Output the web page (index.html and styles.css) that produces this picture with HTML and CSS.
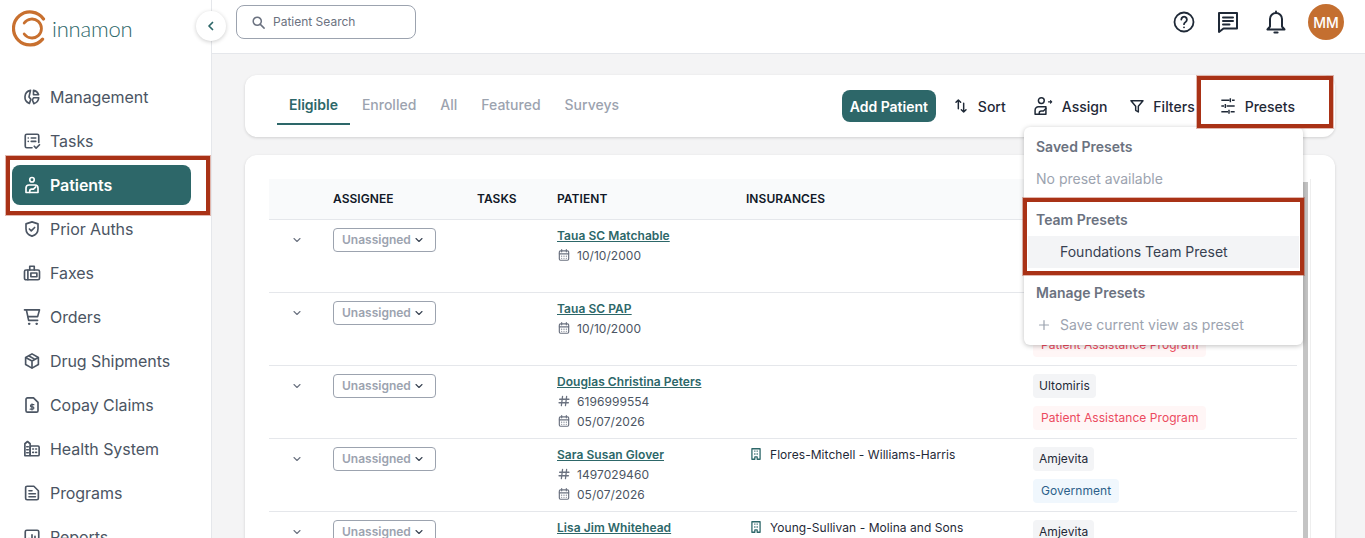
FILE: index.html
```html
<!DOCTYPE html>
<html lang="en">
<head>
  <meta charset="UTF-8">
  <meta name="viewport" content="width=device-width, initial-scale=1.0">
  <title>Cinnamon - Patients</title>
  <link rel="stylesheet" href="styles.css">
</head>
<body>

  <!-- Shared table icons -->
  <svg class="sprite" aria-hidden="true">
    <symbol id="i-chevron" viewBox="0 0 24 24"><path d="M6 9l6 6 6-6" fill="none" stroke="currentColor" stroke-width="2.2" stroke-linecap="round" stroke-linejoin="round"/></symbol>
    <symbol id="i-calendar" viewBox="0 0 24 24"><g fill="none" stroke="currentColor" stroke-width="2" stroke-linecap="round"><rect x="4" y="5" width="16" height="16" rx="2"/><path d="M8 2.500v4M16 2.500v4M4 10h16"/><path d="M8 14h.01M12 14h.01M16 14h.01M8 17.500h.01M12 17.500h.01M16 17.500h.01"/></g></symbol>
    <symbol id="i-hash" viewBox="0 0 24 24"><path d="M9.500 4L7.500 20M16.500 4l-2 16M4.500 9h16M3.500 15h16" fill="none" stroke="currentColor" stroke-width="2.2" stroke-linecap="round"/></symbol>
    <symbol id="i-building" viewBox="0 0 24 24"><g fill="none" stroke="currentColor" stroke-width="2.2" stroke-linejoin="round"><path d="M5 21V3h14v18h-5v-4h-4v4z"/><path d="M9 7h2M13 7h2M9 12h2M13 12h2"/></g></symbol>
  </svg>

  <!-- Sidebar -->
  <aside class="sidebar">
    <div class="logo">
      <svg class="logo-mark" width="38" height="40" viewBox="0 0 38 40">
        <g fill="none" stroke="#c8702f" stroke-linecap="round">
          <path d="M31.500 10A16.500 16.500 0 1 0 30.600 30.100" stroke-width="3.200"/>
          <path d="M12.200 14A9.500 9.500 0 1 1 12.200 25" stroke-width="2.800"/>
        </g>
      </svg>
      <span class="logo-text">innamon</span>
    </div>
    <nav class="nav">
      <a class="nav-item">
        <svg viewBox="0 0 24 24"><g fill="none" stroke="currentColor" stroke-width="2.200" stroke-linejoin="round"><path d="M10 3.200a9 9 0 0 0-1.500 17.300l2-5.500-2.500-3z"/><path d="M14 3.200V9h6.800A9 9 0 0 0 14 3.200z"/><path d="M14 13h7a9 9 0 0 1-6.500 7.800L12.500 16z"/></g></svg>
        Management
      </a>
      <a class="nav-item">
        <svg viewBox="0 0 24 24"><g fill="none" stroke="currentColor" stroke-width="2.200" stroke-linecap="round" stroke-linejoin="round"><path d="M12 21H5a2 2 0 0 1-2-2V5a2 2 0 0 1 2-2h14a2 2 0 0 1 2 2v9"/><path d="M7 8h.01M11 8h6M7 12.500h.01M11 12.500h6M15 19l2.500 2.500L22 17"/></g></svg>
        Tasks
      </a>
      <a class="nav-item active">
        <svg viewBox="0 0 24 24"><g fill="none" stroke="currentColor" stroke-width="2.200" stroke-linecap="round" stroke-linejoin="round"><circle cx="12" cy="5" r="3"/><path d="M4 22v-6a4 4 0 0 1 4-4h8a4 4 0 0 1 4 4v6z"/><path d="M9 22v-2a2.500 2.500 0 0 1 2.500-2.500h2.500l3-3"/></g></svg>
        Patients
      </a>
      <a class="nav-item">
        <svg viewBox="0 0 24 24"><g fill="none" stroke="currentColor" stroke-width="2.200" stroke-linecap="round" stroke-linejoin="round"><path d="M12 2.500l8 2.700v6.300c0 5-3.500 8.500-8 10-4.500-1.500-8-5-8-10V5.200z"/><path d="M8.500 12l2.500 2.500 4.500-4.500"/></g></svg>
        Prior Auths
      </a>
      <a class="nav-item">
        <svg viewBox="0 0 24 24"><g fill="none" stroke="currentColor" stroke-width="2.200" stroke-linecap="round" stroke-linejoin="round"><path d="M9 8V3h6v5"/><rect x="2" y="8" width="20" height="13" rx="2"/><path d="M6.500 8v13"/><rect x="10.500" y="12" width="8" height="5"/></g></svg>
        Faxes
      </a>
      <a class="nav-item">
        <svg viewBox="0 0 24 24"><g fill="none" stroke="currentColor" stroke-width="2.200" stroke-linecap="round" stroke-linejoin="round"><path d="M2 2.500h20l-2.500 9H6.500"/><path d="M4.500 2.500l3 14h12"/><path d="M8 21h.5M18 21h.5" stroke-width="3"/></g></svg>
        Orders
      </a>
      <a class="nav-item">
        <svg viewBox="0 0 24 24"><g fill="none" stroke="currentColor" stroke-width="2.200" stroke-linejoin="round"><path d="M12 2.500l8.500 4.800v9.400L12 21.500l-8.500-4.800V7.300z"/><path d="M3.500 7.300L12 12l8.500-4.700M12 12v9.500M7.500 5l8.500 4.800"/></g></svg>
        Drug Shipments
      </a>
      <a class="nav-item">
        <svg viewBox="0 0 24 24"><g fill="none" stroke="currentColor" stroke-width="2.200" stroke-linecap="round" stroke-linejoin="round"><path d="M14 2.500H6a2 2 0 0 0-2 2v15a2 2 0 0 0 2 2h12a2 2 0 0 0 2-2V8.500z"/><path d="M14.500 11.500h-3a1.400 1.400 0 0 0 0 3h1.500a1.400 1.400 0 0 1 0 3H9.500M12 10.500v8" stroke-width="1.600"/></g></svg>
        Copay Claims
      </a>
      <a class="nav-item">
        <svg viewBox="0 0 24 24"><g fill="none" stroke="currentColor" stroke-width="2.200" stroke-linecap="round" stroke-linejoin="round"><path d="M2.500 21V5l3.500-3 3.500 3v16z"/><rect x="9.500" y="8" width="12" height="13" rx="1.500"/><path d="M13 12h1M17 12h1M13 16.500h1M17 16.500h1M5 9h2M5 13h2M5 17h2"/></g></svg>
        Health System
      </a>
      <a class="nav-item">
        <svg viewBox="0 0 24 24"><g fill="none" stroke="currentColor" stroke-width="2.200" stroke-linecap="round" stroke-linejoin="round"><path d="M14.500 3H5.500a2 2 0 0 0-2 2v14a2 2 0 0 0 2 2h13a2 2 0 0 0 2-2V9z"/><path d="M8 9h4M8 13h8.500M8 17h8.500"/></g></svg>
        Programs
      </a>
      <a class="nav-item">
        <svg viewBox="0 0 24 24"><g fill="none" stroke="currentColor" stroke-width="2.200" stroke-linecap="round" stroke-linejoin="round"><rect x="3" y="3" width="18" height="18" rx="2"/><path d="M8 17v-3M12 17V9M16 17v-6"/></g></svg>
        Reports
      </a>
    </nav>
  </aside>

  <button class="collapse">
    <svg width="12" height="12" viewBox="0 0 24 24"><path d="M15 5l-7 7 7 7" fill="none" stroke="#2d6769" stroke-width="3.500" stroke-linecap="round" stroke-linejoin="round"/></svg>
  </button>

  <div class="main">
    <!-- Top bar -->
    <header class="topbar">
      <div class="search">
        <svg width="15" height="15" viewBox="0 0 24 24"><g fill="none" stroke="#6b7280" stroke-width="2.400" stroke-linecap="round"><circle cx="10" cy="10" r="6.500"/><path d="M15 15l6 6"/></g></svg>
        <span class="search-text">Patient Search</span>
      </div>
      <div class="top-actions">
        <svg class="help" width="24" height="24" viewBox="0 0 24 24"><g fill="none" stroke="#1f2937" stroke-width="1.800" stroke-linecap="round"><circle cx="12" cy="12" r="9.500"/><path d="M9.300 9.500a2.800 2.800 0 1 1 4.300 2.400c-1 .6-1.600 1.100-1.600 2.300M12 17.300h.01"/></g></svg>
        <svg class="msg" width="24" height="24" viewBox="0 0 24 24"><g fill="none" stroke="#1f2937" stroke-width="2" stroke-linecap="round" stroke-linejoin="round"><path d="M3 3h18v15.500H7.500L3 22z"/><path d="M7 7.500h10M7 11h10M7 14.500h6.500"/></g></svg>
        <svg class="bell" width="24" height="24" viewBox="0 0 24 24"><g fill="none" stroke="#1f2937" stroke-width="2" stroke-linecap="round" stroke-linejoin="round"><path d="M12 3a6 6 0 0 0-6 6v7.500L3.500 19.500h17L18 16.500V9a6 6 0 0 0-6-6z"/><path d="M12 1.500V3"/><path d="M10.500 22.500h3" stroke-width="2.200"/></g></svg>
        <div class="avatar">MM</div>
      </div>
    </header>

    <div class="content">
      <!-- Tabs and toolbar -->
      <section class="card toolbar">
        <div class="tabs">
          <a class="tab active">Eligible</a>
          <a class="tab">Enrolled</a>
          <a class="tab">All</a>
          <a class="tab">Featured</a>
          <a class="tab">Surveys</a>
        </div>
        <div class="actions">
          <button class="btn-add">Add Patient</button>
          <a class="action action-sort">
            <svg width="16" height="16" viewBox="0 0 24 24"><g fill="none" stroke="#1f2937" stroke-width="2.200" stroke-linecap="round" stroke-linejoin="round"><path d="M8 16V3M4.500 6.500L8 3l3.500 3.500M16 8v13M12.500 17.500L16 21l3.500-3.500"/></g></svg>
            Sort
          </a>
          <a class="action action-assign">
            <svg width="20" height="20" viewBox="0 0 24 24"><g fill="none" stroke="#1f2937" stroke-width="1.800" stroke-linecap="round" stroke-linejoin="round"><circle cx="10" cy="5.500" r="3.500"/><path d="M2.500 22v-5a4 4 0 0 1 4-4h9v9z"/><path d="M7.500 22v-1.500A2.500 2.500 0 0 1 10 18h2.500l3-3"/><path d="M18.500 7h4M21 5.500L22.500 7 21 8.500" stroke-width="1.300"/></g></svg>
            Assign
          </a>
          <a class="action action-filter">
            <svg width="16" height="16" viewBox="0 0 24 24"><path d="M3 4h18l-7 8.500V21l-4-2.500v-6z" fill="none" stroke="#1f2937" stroke-width="2.200" stroke-linejoin="round"/></svg>
            Filters
          </a>
          <a class="action action-presets">
            <svg width="16" height="16" viewBox="0 0 24 24"><path d="M2 3.500h12M18 3.500h4M2 12h4M10 12h12M2 20.500h10M16 20.500h6M15.500 .5v6M8 9v6M13.500 17.500v6" fill="none" stroke="#1f2937" stroke-width="2.200"/></svg>
            Presets
          </a>
        </div>
      </section>

      <!-- Patient table -->
      <section class="card table-card">
        <table class="patients">
          <thead>
            <tr>
              <th class="col-toggle"></th>
              <th class="col-assignee">ASSIGNEE</th>
              <th class="col-tasks">TASKS</th>
              <th class="col-patient">PATIENT</th>
              <th class="col-ins">INSURANCES</th>
              <th></th>
            </tr>
          </thead>
          <tbody>
            <tr>
              <td class="toggle"><svg><use href="#i-chevron"/></svg></td>
              <td><button class="assign-btn">Unassigned <svg><use href="#i-chevron"/></svg></button></td>
              <td></td>
              <td>
                <a class="patient-name">Taua SC Matchable</a>
                <div class="meta"><svg><use href="#i-calendar"/></svg>10/10/2000</div>
              </td>
              <td></td>
              <td></td>
            </tr>
            <tr>
              <td class="toggle"><svg><use href="#i-chevron"/></svg></td>
              <td><button class="assign-btn">Unassigned <svg><use href="#i-chevron"/></svg></button></td>
              <td></td>
              <td>
                <a class="patient-name">Taua SC PAP</a>
                <div class="meta"><svg><use href="#i-calendar"/></svg>10/10/2000</div>
              </td>
              <td></td>
              <td><span class="chip chip-red chip-second">Patient Assistance Program</span></td>
            </tr>
            <tr>
              <td class="toggle"><svg><use href="#i-chevron"/></svg></td>
              <td><button class="assign-btn">Unassigned <svg><use href="#i-chevron"/></svg></button></td>
              <td></td>
              <td>
                <a class="patient-name">Douglas Christina Peters</a>
                <div class="meta"><svg><use href="#i-hash"/></svg>6196999554</div>
                <div class="meta"><svg><use href="#i-calendar"/></svg>05/07/2026</div>
              </td>
              <td></td>
              <td><span class="chip">Ultomiris</span><span class="chip chip-red">Patient Assistance Program</span></td>
            </tr>
            <tr>
              <td class="toggle"><svg><use href="#i-chevron"/></svg></td>
              <td><button class="assign-btn">Unassigned <svg><use href="#i-chevron"/></svg></button></td>
              <td></td>
              <td>
                <a class="patient-name">Sara Susan Glover</a>
                <div class="meta"><svg><use href="#i-hash"/></svg>1497029460</div>
                <div class="meta"><svg><use href="#i-calendar"/></svg>05/07/2026</div>
              </td>
              <td><div class="insurance"><svg><use href="#i-building"/></svg>Flores-Mitchell - Williams-Harris</div></td>
              <td><span class="chip">Amjevita</span><span class="chip chip-blue">Government</span></td>
            </tr>
            <tr>
              <td class="toggle"><svg><use href="#i-chevron"/></svg></td>
              <td><button class="assign-btn">Unassigned <svg><use href="#i-chevron"/></svg></button></td>
              <td></td>
              <td>
                <a class="patient-name">Lisa Jim Whitehead</a>
              </td>
              <td><div class="insurance"><svg><use href="#i-building"/></svg>Young-Sullivan - Molina and Sons</div></td>
              <td><span class="chip">Amjevita</span></td>
            </tr>
          </tbody>
        </table>
        <div class="scrollbar"><div class="scroll-thumb"></div></div>
      </section>
    </div>
  </div>

  <!-- Presets dropdown -->
  <div class="dropdown">
    <div class="dd-section">
      <div class="dd-title">Saved Presets</div>
      <div class="dd-row dd-muted">No preset available</div>
    </div>
    <div class="dd-section">
      <div class="dd-title">Team Presets</div>
      <div class="dd-row dd-selected">Foundations Team Preset</div>
    </div>
    <div class="dd-section">
      <div class="dd-title">Manage Presets</div>
      <div class="dd-row dd-muted dd-add">
        <svg width="12" height="12" viewBox="0 0 24 24"><path d="M12 3v18M3 12h18" fill="none" stroke="#9ca3af" stroke-width="2.400" stroke-linecap="round"/></svg>
        Save current view as preset
      </div>
    </div>
  </div>

  <!-- Callouts -->
  <div class="callout callout-nav"></div>
  <div class="callout callout-presets"></div>
  <div class="callout callout-team"></div>

</body>
</html>
```

FILE: styles.css
```css
/* General Styles */
html, body {
  height: 100%;
  overflow: hidden;
}

body {
  font-family: 'Inter', 'Liberation Sans', sans-serif;
  background-color: #f4f4f5;
  color: #111827;
  margin: 0;
  padding: 0;
  display: flex;
  position: relative;
}

button {
  font-family: inherit;
}

.sprite {
  display: none;
}

/* Sidebar */
.sidebar {
  width: 211px;
  flex-shrink: 0;
  background-color: #fff;
  border-right: 1px solid #e5e7eb;
}

.logo {
  display: flex;
  align-items: center;
  height: 60px;
  padding-left: 12px;
  margin-bottom: 17px;
}

.logo-mark {
  margin-top: -2px;
}

.logo-text {
  font-family: 'Lato', sans-serif;
  font-weight: 300;
  font-size: 22px;
  letter-spacing: -0.2px;
  color: #2d6769;
  margin-left: 2px;
  margin-top: -3px;
}

.nav {
  display: flex;
  flex-direction: column;
  gap: 4px;
  padding: 0 20px 0 12px;
}

.nav-item {
  display: flex;
  align-items: center;
  gap: 9px;
  height: 40px;
  padding-left: 11px;
  border-radius: 8px;
  font-size: 16px;
  letter-spacing: -0.07px;
  color: #4b5563;
}

.nav-item svg {
  width: 18px;
  height: 18px;
  flex-shrink: 0;
}

.nav-item.active {
  background-color: #2d6769;
  color: #fff;
  font-weight: 600;
}

.collapse {
  position: absolute;
  left: 196px;
  top: 11px;
  width: 30px;
  height: 30px;
  padding: 0;
  border: none;
  border-radius: 50%;
  background-color: #fff;
  box-shadow: 0 1px 4px rgba(0, 0, 0, 0.2);
  display: flex;
  align-items: center;
  justify-content: center;
}

/* Top Bar */
.main {
  flex: 1;
  min-width: 0;
}

.topbar {
  height: 53px;
  background-color: #fff;
  border-bottom: 1px solid #e5e7eb;
  display: flex;
  align-items: center;
  justify-content: space-between;
  padding: 0 21px 0 24px;
  box-sizing: content-box;
}

.search {
  width: 180px;
  height: 34px;
  box-sizing: border-box;
  margin-top: -9px;
  display: flex;
  align-items: center;
  gap: 7px;
  padding-left: 14px;
  border: 1px solid #9ca3af;
  border-radius: 8px;
  font-size: 12px;
  color: #6b7280;
}

.search-text {
  margin-top: -1px;
}

.top-actions {
  display: flex;
  align-items: center;
  margin-top: -9px;
}

.help { margin-right: 20px; }
.msg { margin-right: 24px; }
.bell { margin-right: 20px; }

.avatar {
  width: 36px;
  height: 36px;
  border-radius: 50%;
  background-color: #c46f30;
  color: #fff;
  font-size: 14px;
  font-weight: 500;
  display: flex;
  align-items: center;
  justify-content: center;
}

/* Cards */
.content {
  padding: 21px 30px 0 33px;
}

.card {
  background-color: #fff;
  border-radius: 12px;
  box-shadow: 0 1px 3px rgba(0, 0, 0, 0.15);
}

.toolbar {
  height: 62px;
  display: flex;
  align-items: center;
  justify-content: space-between;
  padding-left: 32px;
  margin-bottom: 18px;
}

.tabs {
  display: flex;
  margin-top: 2px;
}

.tab {
  padding: 0 12px;
  height: 36px;
  line-height: 32px;
  box-sizing: border-box;
  font-size: 14px;
  font-weight: 500;
  color: #9ca3af;
}

.tab.active {
  color: #2d6769;
  font-weight: 600;
  border-bottom: 2px solid #2d6769;
}

.actions {
  display: flex;
  align-items: center;
}

.btn-add {
  height: 32px;
  width: 94px;
  padding: 0;
  border: none;
  border-radius: 8px;
  background-color: #2d6769;
  color: #fff;
  font-size: 14px;
  font-weight: 600;
  margin-right: 17px;
}

.action {
  display: flex;
  align-items: center;
  font-size: 14px;
  font-weight: 500;
  color: #1f2937;
}

.action-sort { gap: 9px; margin-right: 27px; }
.action-assign { gap: 9px; margin-right: 22px; }
.action-filter { gap: 8px; margin-right: 25px; }
.action-presets { gap: 9px; margin-right: 40px; }

/* Patient Table */
.table-card {
  display: flex;
  height: 500px;
  padding: 24px 0 0 24px;
  box-sizing: border-box;
}

.patients {
  width: 1028px;
  height: 0;
  flex-shrink: 0;
  border-collapse: separate;
  border-spacing: 0;
  table-layout: fixed;
  font-size: 12px;
  letter-spacing: 0.05px;
}

.patients th {
  height: 41px;
  box-sizing: border-box;
  padding: 0 0 2px;
  border-bottom: 1px solid #e5e7eb;
  text-align: left;
  font-weight: 600;
  color: #111827;
  background-color: #f9fafb;
}

.col-toggle { width: 64px; }
.col-assignee { width: 144px; }
.col-tasks { width: 80px; }
.col-patient { width: 189px; }
.col-ins { width: 287px; }

.patients td {
  height: 73px;
  padding: 8px 0 0;
  box-sizing: border-box;
  border-bottom: 1px solid #e5e7eb;
  vertical-align: top;
}

.patients td.toggle {
  color: #6b7280;
  padding-left: 22px;
}

.toggle svg {
  width: 12px;
  height: 12px;
  margin-top: 6px;
}

.assign-btn {
  width: 103px;
  height: 24px;
  padding: 0 0 2px 8px;
  background-color: #fff;
  border: 1px solid #9ca3af;
  border-radius: 4px;
  display: flex;
  align-items: center;
  gap: 2px;
  font-size: 12px;
  font-weight: 600;
  color: #9ca3af;
}

.assign-btn svg {
  width: 12px;
  height: 12px;
  margin-top: 2px;
  color: #374151;
}

.patient-name {
  display: block;
  width: fit-content;
  margin: -2px 0 -1px;
  line-height: 20px;
  color: #2d6769;
  font-weight: 600;
  text-decoration: underline;
}

.meta {
  display: flex;
  align-items: center;
  gap: 6px;
  height: 20px;
  color: #4b5563;
}

.meta svg {
  width: 14px;
  height: 14px;
  color: #6b7280;
}

.insurance {
  display: flex;
  align-items: center;
  gap: 7px;
  height: 20px;
  margin-top: -3px;
  padding-left: 3px;
  color: #1f2937;
}

.insurance svg {
  width: 14px;
  height: 14px;
  color: #2d6769;
}

.chip {
  display: block;
  width: fit-content;
  height: 24px;
  line-height: 24px;
  padding: 0 6px;
  margin-bottom: 8px;
  border-radius: 4px;
  background-color: #f3f4f6;
  color: #1f2937;
}

.chip-red {
  background-color: #fff6f6;
  color: #ec4a5e;
  padding: 0 8px;
}

.chip-blue {
  background-color: #f0f7fd;
  color: #2c5f8a;
  padding: 0 8px;
}

.chip-second {
  margin-top: 32px;
}

.scrollbar {
  width: 10px;
  margin-left: 3px;
  box-sizing: content-box;
  border-right: 1px solid #eeeeee;
}

.scroll-thumb {
  margin: 3px 0 0 3px;
  width: 5px;
  height: 400px;
  background-color: #c4c4c4;
}

/* Presets Dropdown */
.dropdown {
  position: absolute;
  left: 1024px;
  top: 127px;
  width: 279px;
  box-sizing: border-box;
  padding: 4px;
  display: flex;
  flex-direction: column;
  gap: 9px;
  background-color: #fff;
  border-radius: 6px;
  box-shadow: 0 1px 5px rgba(0, 0, 0, 0.25);
  font-size: 14px;
}

.dd-title,
.dd-row {
  height: 32px;
  line-height: 32px;
  padding-left: 8px;
}

.dd-title {
  font-weight: 600;
  color: #6b7280;
}

.dd-muted {
  color: #9ca3af;
}

.dd-selected {
  background-color: #f3f4f6;
  color: #374151;
  padding-left: 32px;
}

.dd-add {
  display: flex;
  align-items: center;
  gap: 10px;
  padding-left: 10px;
}

/* Callouts */
.callout {
  position: absolute;
  box-sizing: border-box;
  border: 4px solid #a93216;
  box-shadow: 0 0 0 1px rgba(169, 50, 22, 0.35);
}

.callout-nav { left: 6px; top: 156px; width: 204px; height: 59px; }
.callout-presets { left: 1197px; top: 76px; width: 136px; height: 52px; }
.callout-team { left: 1023px; top: 198px; width: 281px; height: 77px; }
```
